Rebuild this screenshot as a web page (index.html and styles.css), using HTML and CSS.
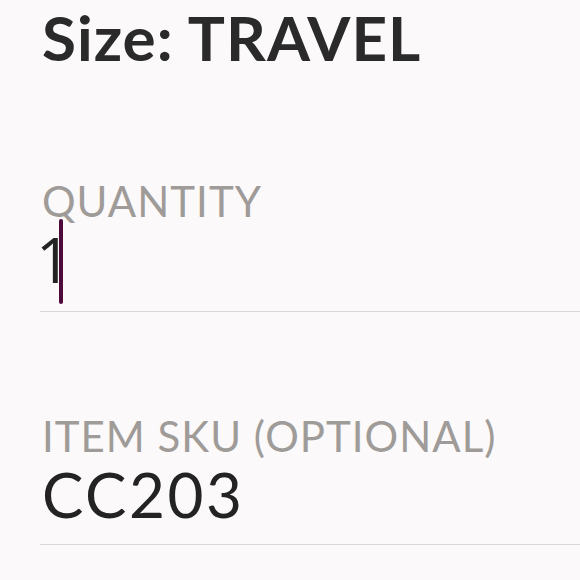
FILE: index.html
```html
<!DOCTYPE html>
<html>
<head>
    <meta charset="utf-8">
    <link rel="stylesheet" href="styles.css">
</head>
<body>
    <div class="sheet">
        <h1 class="size-title">Size: TRAVEL</h1>
        <div class="field field-qty">
            <div class="field-label">QUANTITY</div>
            <div class="field-value qty-value">1<span class="caret"></span></div>
        </div>
        <div class="field field-sku">
            <div class="field-label">ITEM SKU (OPTIONAL)</div>
            <div class="field-value">CC203</div>
        </div>
    </div>
</body>
</html>
```
FILE: styles.css
```css
body {
    margin: 0;
    background: #fbf9fa;
    font-family: Lato, "Open Sans", sans-serif;
}
.sheet {
    padding-left: 40px;
}
.size-title {
    margin: 0;
    font-size: 62px;
    font-weight: 700;
    line-height: 1.2;
    letter-spacing: 1px;
    color: #2b2a2b;
    padding-left: 2px;
}
.field {
    border-bottom: 1px solid #dcd8d8;
}
.field-qty {
    margin-top: 106px;
    padding-bottom: 21px;
}
.field-sku {
    margin-top: 103px;
    padding-bottom: 19px;
}
.field-label {
    font-size: 42px;
    line-height: 42px;
    letter-spacing: 1px;
    color: #9f9b98;
    padding-left: 2px;
}
.field-value {
    position: relative;
    margin-top: 6px;
    font-size: 62px;
    line-height: 62px;
    letter-spacing: 2.5px;
    color: #242323;
    padding-left: 2px;
}
/* lato's one has a foot, the original doesn't */
.qty-value {
    font-family: "Open Sans", sans-serif;
    margin-left: -6px;
}
.caret {
    position: absolute;
    left: 25px;
    top: -9px;
    width: 4px;
    height: 85px;
    border-radius: 2px;
    background: #4e0a39;
}
```
